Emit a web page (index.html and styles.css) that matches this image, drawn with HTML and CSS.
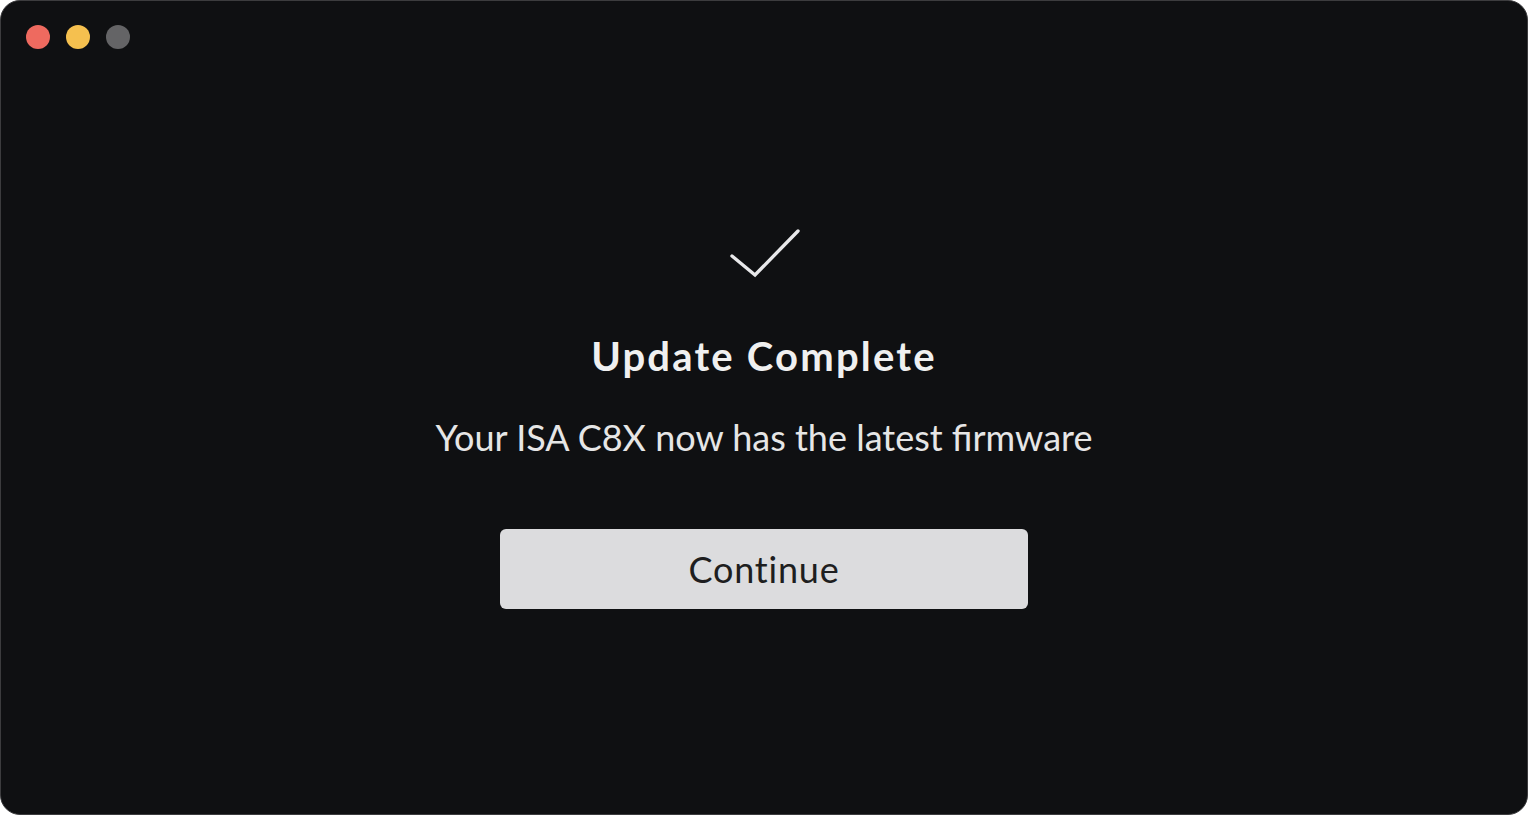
FILE: index.html
```html
<!DOCTYPE html>
<html>
<head>
<meta charset="utf-8">
<link rel="stylesheet" href="styles.css">
</head>
<body>
<div class="window">
  <div class="titlebar">
    <span class="light red"></span>
    <span class="light yellow"></span>
    <span class="light gray"></span>
  </div>
  <main class="content">
    <svg class="check" width="70" height="50" viewBox="0 0 70 50">
      <polyline points="2,27 25,46 68,2" fill="none" stroke="#e8e8ea" stroke-width="3.4" stroke-linecap="round" stroke-linejoin="miter"/>
    </svg>
    <h1 class="title">Update Complete</h1>
    <p class="subtitle">Your ISA C8X now has the latest firmware</p>
    <button class="btn">Continue</button>
  </main>
</div>
</body>
</html>
```

FILE: styles.css
```css
html, body {
  margin: 0;
  padding: 0;
  background: #ffffff;
  width: 1528px;
  height: 815px;
  overflow: hidden;
}
.window {
  box-sizing: border-box;
  width: 1528px;
  height: 815px;
  background: #0f1012;
  border: 1px solid #3c3c3e;
  border-radius: 20px;
  display: flex;
  flex-direction: column;
  font-family: Lato, "Open Sans", sans-serif;
}
.titlebar {
  display: flex;
  gap: 16px;
  padding: 24px 0 0 25px;
  height: 26px;
}
.light {
  width: 24px;
  height: 24px;
  border-radius: 50%;
  display: block;
}
.red { background: #ee6a5f; }
.yellow { background: #f5c04f; }
.gray { background: #646466; }
.content {
  display: flex;
  flex-direction: column;
  align-items: center;
  padding-top: 178px;
}
.check {
  display: block;
  margin-left: 2px;
}
.title {
  margin: 52px 0 0;
  font-size: 40px;
  font-weight: 700;
  letter-spacing: 2.2px;
  color: #f0f0f0;
  line-height: 50px;
}
.subtitle {
  margin: 33px 0 0;
  font-size: 36px;
  font-weight: 400;
  color: #e6e6e6;
  line-height: 46px;
}
.btn {
  margin-top: 69px;
  width: 528px;
  height: 80px;
  border: none;
  border-radius: 6px;
  background: #dcdcde;
  color: #1e1e20;
  font-family: Lato, "Open Sans", sans-serif;
  font-size: 36px;
  letter-spacing: 0.8px;
  font-weight: 400;
}
```
